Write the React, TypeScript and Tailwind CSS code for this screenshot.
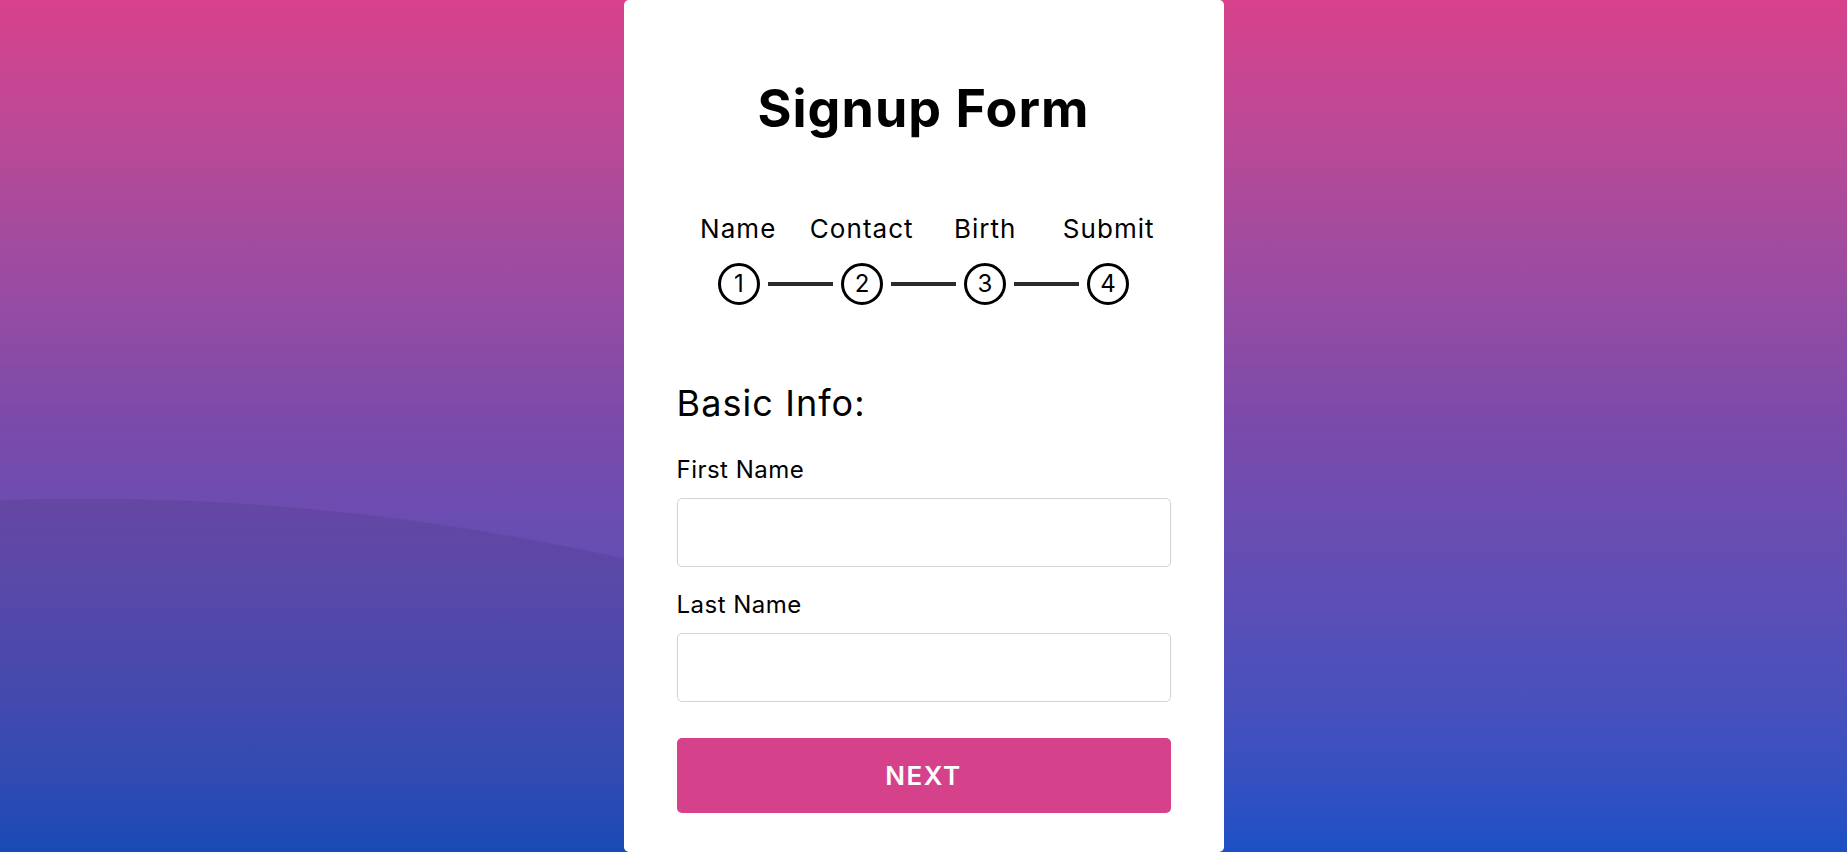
import { useState } from "react";

const steps = ["Name", "Contact", "Birth", "Submit"];

const Field = ({ label, value, onChange }: { label: string; value: string; onChange: (v: string) => void }) => (
  <div>
    <label className="block text-[24px] leading-[30px] text-black tracking-[0.02em]">{label}</label>
    <input
      value={value}
      onChange={e => onChange(e.target.value)}
      className="mt-[13px] block w-full h-[69px] rounded-[5px] border border-[#d3d3d3] bg-white px-4 text-[20px] outline-none"
    />
  </div>
);

const App = () => {
  const [first, setFirst] = useState("");
  const [last, setLast] = useState("");

  return (
    <div className="relative min-h-screen overflow-hidden bg-gradient-to-b from-[#d8418b] via-[#7a4aab] to-[#1a50c5] font-['Inter','Noto_Sans',sans-serif]">
      {/* soft wave on the left */}
      <svg className="absolute left-0 top-0 h-[852px] w-[640px]" viewBox="0 0 640 852" preserveAspectRatio="none">
        <path d="M0 500 C 200 494 400 508 640 562 L640 852 L0 852 Z" fill="#000" fillOpacity="0.07" />
      </svg>

      <div className="relative mx-auto w-[600px] rounded-[5px] bg-white px-[53px] pt-[79px] pb-[39px]">
        <h1 className="text-center text-[52px] leading-[60px] font-bold tracking-[0.02em] text-black">Signup Form</h1>

        {/* progress */}
        <div className="mt-[75px] grid grid-cols-4">
          {steps.map(s => (
            <p key={s} className="text-center text-[26px] leading-[30px] tracking-[0.04em] text-black">
              {s}
            </p>
          ))}
        </div>
        <div className="mt-[19px] flex items-center justify-center">
          {steps.map((s, i) => (
            <div key={s} className="flex items-center">
              {i > 0 && <div className="mx-[8px] h-[4px] w-[65px] bg-[#2b2b2b]" />}
              <div className="flex h-[42px] w-[42px] items-center justify-center rounded-full border-[3px] border-black text-[24px] leading-none text-black">
                {i + 1}
              </div>
            </div>
          ))}
        </div>

        {/* step 1 */}
        <h2 className="mt-[76px] text-[36px] leading-[44px] tracking-[0.03em] text-black">Basic Info:</h2>
        <div className="mt-[30px] space-y-[23px]">
          <Field label="First Name" value={first} onChange={setFirst} />
          <Field label="Last Name" value={last} onChange={setLast} />
        </div>
        <button className="mt-[36px] flex h-[75px] w-full items-center justify-center rounded-[5px] bg-[#d6418c] text-[26px] font-semibold tracking-[0.06em] text-white">
          NEXT
        </button>
      </div>
    </div>
  );
};

export default App;
